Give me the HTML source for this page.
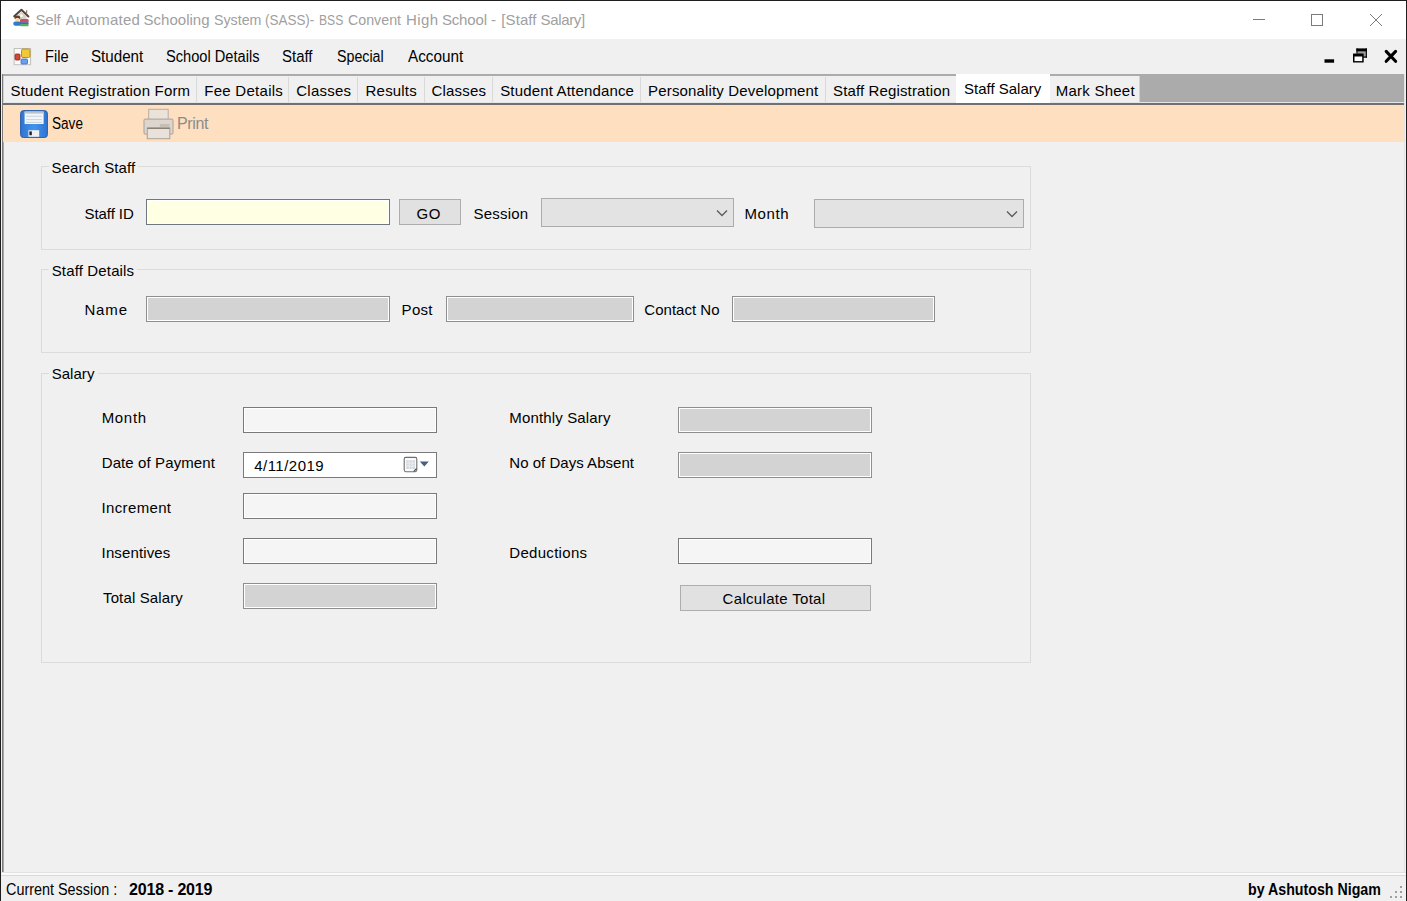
<!DOCTYPE html><html><head><meta charset='utf-8'><style>html,body{margin:0;padding:0;width:1407px;height:901px;overflow:hidden;background:#f0f0f0}.t{position:absolute;font-family:'Liberation Sans',sans-serif;line-height:1;white-space:nowrap}</style></head><body>
<div style="position:absolute;left:0px;top:0px;width:1407px;height:901px;box-sizing:border-box;background:#f0f0f0"></div>
<div style="position:absolute;left:0px;top:0px;width:1407px;height:1px;box-sizing:border-box;background:#1e1e1e"></div>
<div style="position:absolute;left:0px;top:0px;width:1px;height:901px;box-sizing:border-box;background:#1e1e1e"></div>
<div style="position:absolute;left:1406px;top:0px;width:1px;height:901px;box-sizing:border-box;background:#1e1e1e"></div>
<div style="position:absolute;left:1px;top:1px;width:1405px;height:38px;box-sizing:border-box;background:#fff"></div>
<div style="position:absolute;left:1px;top:39px;width:1405px;height:35px;box-sizing:border-box;background:#f0f0f0"></div>
<div style="position:absolute;left:2px;top:74px;width:1px;height:799px;box-sizing:border-box;background:#7c7c7c"></div>
<div style="position:absolute;left:3px;top:74px;width:1px;height:799px;box-sizing:border-box;background:#a8a8a8"></div>
<div style="position:absolute;left:1404px;top:74px;width:1px;height:799px;box-sizing:border-box;background:#e3e3e3"></div>
<div style="position:absolute;left:3px;top:74px;width:1401px;height:30px;box-sizing:border-box;background:#ababab"></div>
<div style="position:absolute;left:4px;top:76px;width:1136px;height:26px;box-sizing:border-box;background:#f0f0f0"></div>
<div style="position:absolute;left:196px;top:77px;width:1px;height:25px;box-sizing:border-box;background:#d9d9d9"></div>
<div style="position:absolute;left:288px;top:77px;width:1px;height:25px;box-sizing:border-box;background:#d9d9d9"></div>
<div style="position:absolute;left:357px;top:77px;width:1px;height:25px;box-sizing:border-box;background:#d9d9d9"></div>
<div style="position:absolute;left:424px;top:77px;width:1px;height:25px;box-sizing:border-box;background:#d9d9d9"></div>
<div style="position:absolute;left:492px;top:77px;width:1px;height:25px;box-sizing:border-box;background:#d9d9d9"></div>
<div style="position:absolute;left:640px;top:77px;width:1px;height:25px;box-sizing:border-box;background:#d9d9d9"></div>
<div style="position:absolute;left:825px;top:77px;width:1px;height:25px;box-sizing:border-box;background:#d9d9d9"></div>
<div style="position:absolute;left:1139px;top:76px;width:1px;height:26px;box-sizing:border-box;background:#d0d0d0"></div>
<div style="position:absolute;left:3px;top:76px;width:1px;height:26px;box-sizing:border-box;background:#d0d0d0"></div>
<div style="position:absolute;left:956px;top:74px;width:94px;height:29px;box-sizing:border-box;background:#fff"></div>
<div style="position:absolute;left:3px;top:102px;width:1401px;height:1px;box-sizing:border-box;background:#e6e6e6"></div>
<div style="position:absolute;left:956px;top:102px;width:94px;height:1px;box-sizing:border-box;background:#fff"></div>
<div style="position:absolute;left:3px;top:103px;width:1401px;height:2px;box-sizing:border-box;background:#707070"></div>
<div style="position:absolute;left:3px;top:105px;width:1401px;height:37px;box-sizing:border-box;background:#fedfc0"></div>
<div style="position:absolute;left:1px;top:872px;width:1405px;height:1px;box-sizing:border-box;background:#e2e2e2"></div>
<div style="position:absolute;left:1px;top:873px;width:1405px;height:2px;box-sizing:border-box;background:#fafafa"></div>
<div style="position:absolute;left:1px;top:875px;width:1405px;height:1px;box-sizing:border-box;background:#d9d9d9"></div>
<div style="position:absolute;left:41px;top:166px;width:990px;height:84px;box-sizing:border-box;border:1px solid #dcdcdc"></div>
<div style="position:absolute;left:49px;top:165px;width:89px;height:3px;box-sizing:border-box;background:#f0f0f0"></div>
<div style="position:absolute;left:41px;top:269px;width:990px;height:84px;box-sizing:border-box;border:1px solid #dcdcdc"></div>
<div style="position:absolute;left:49px;top:268px;width:88px;height:3px;box-sizing:border-box;background:#f0f0f0"></div>
<div style="position:absolute;left:41px;top:373px;width:990px;height:290px;box-sizing:border-box;border:1px solid #dcdcdc"></div>
<div style="position:absolute;left:49px;top:372px;width:49px;height:3px;box-sizing:border-box;background:#f0f0f0"></div>
<div style="position:absolute;left:146px;top:199px;width:244px;height:26px;box-sizing:border-box;border:1px solid #6f7780;background:#ffffe3;box-shadow:inset 0 0 0 1px #fff"></div>
<div style="position:absolute;left:146px;top:296px;width:244px;height:26px;box-sizing:border-box;border:1px solid #8e8e8e;background:#d3d3d3;box-shadow:inset 0 0 0 1px #fff"></div>
<div style="position:absolute;left:446px;top:296px;width:188px;height:26px;box-sizing:border-box;border:1px solid #8e8e8e;background:#d3d3d3;box-shadow:inset 0 0 0 1px #fff"></div>
<div style="position:absolute;left:732px;top:296px;width:203px;height:26px;box-sizing:border-box;border:1px solid #8e8e8e;background:#d3d3d3;box-shadow:inset 0 0 0 1px #fff"></div>
<div style="position:absolute;left:243px;top:407px;width:194px;height:26px;box-sizing:border-box;border:1px solid #7a7a7a;background:#f5f5f5;box-shadow:inset 0 0 0 1px #fff"></div>
<div style="position:absolute;left:243px;top:452px;width:194px;height:26px;box-sizing:border-box;border:1px solid #7a7a7a;background:#fff"></div>
<div style="position:absolute;left:243px;top:493px;width:194px;height:26px;box-sizing:border-box;border:1px solid #7a7a7a;background:#f5f5f5;box-shadow:inset 0 0 0 1px #fff"></div>
<div style="position:absolute;left:243px;top:538px;width:194px;height:26px;box-sizing:border-box;border:1px solid #7a7a7a;background:#f5f5f5;box-shadow:inset 0 0 0 1px #fff"></div>
<div style="position:absolute;left:243px;top:583px;width:194px;height:26px;box-sizing:border-box;border:1px solid #8e8e8e;background:#d3d3d3;box-shadow:inset 0 0 0 1px #fff"></div>
<div style="position:absolute;left:678px;top:407px;width:194px;height:26px;box-sizing:border-box;border:1px solid #8e8e8e;background:#d3d3d3;box-shadow:inset 0 0 0 1px #fff"></div>
<div style="position:absolute;left:678px;top:452px;width:194px;height:26px;box-sizing:border-box;border:1px solid #8e8e8e;background:#d3d3d3;box-shadow:inset 0 0 0 1px #fff"></div>
<div style="position:absolute;left:678px;top:538px;width:194px;height:26px;box-sizing:border-box;border:1px solid #7a7a7a;background:#f5f5f5;box-shadow:inset 0 0 0 1px #fff"></div>
<div style="position:absolute;left:399px;top:199px;width:62px;height:26px;box-sizing:border-box;border:1px solid #adadad;background:#e1e1e1"></div>
<div style="position:absolute;left:680px;top:585px;width:191px;height:26px;box-sizing:border-box;border:1px solid #adadad;background:#e1e1e1"></div>
<div style="position:absolute;left:541px;top:198px;width:193px;height:29px;box-sizing:border-box;border:1px solid #acacac;background:#e3e3e3"></div>
<div style="position:absolute;left:814px;top:199px;width:210px;height:29px;box-sizing:border-box;border:1px solid #acacac;background:#e3e3e3"></div>
<svg style='position:absolute;left:716px;top:209px' width='12' height='8'><path d='M1 1.5 L6 6.5 L11 1.5' fill='none' stroke='#5a5a5a' stroke-width='1.3'/></svg>
<svg style='position:absolute;left:1006px;top:210px' width='12' height='8'><path d='M1 1.5 L6 6.5 L11 1.5' fill='none' stroke='#5a5a5a' stroke-width='1.3'/></svg>
<svg style='position:absolute;left:1240px;top:5px' width='160' height='30'><path d='M13 14.5 H25' stroke='#7a7a7a' stroke-width='1'/><rect x='71.5' y='9.5' width='11' height='11' fill='none' stroke='#7a7a7a' stroke-width='1'/><path d='M130 9 L142 21 M142 9 L130 21' stroke='#7a7a7a' stroke-width='1'/></svg>
<svg style='position:absolute;left:1320px;top:44px' width='85' height='24'><rect x='4.5' y='15.3' width='9.6' height='3.4' fill='#000'/><rect x='37.4' y='7' width='8.4' height='6' fill='#9c9c9c'/><rect x='36.4' y='4.4' width='10.5' height='2.9' fill='#000'/><rect x='36.4' y='4.4' width='1.2' height='5.2' fill='#000'/><rect x='45.7' y='4.4' width='1.2' height='9.3' fill='#000'/><rect x='43' y='12.5' width='3.9' height='1.2' fill='#000'/><rect x='33' y='9.4' width='10.7' height='9.1' rx='0.5' fill='#000'/><rect x='34.5' y='12.5' width='7.7' height='4.6' fill='#fff'/><path d='M66.2 7.4 L75.6 17.3 M75.6 7.4 L66.2 17.3' stroke='#000' stroke-width='3.1' stroke-linecap='round'/></svg>
<svg style='position:absolute;left:8px;top:4px' width='28' height='28'><path d='M8.5 12.5 L13.4 8 L18.5 12.5 V15.5 H8.5Z' fill='#d9d0c6'/><path d='M12.2 10.5 h2.4 v2.4 h-2.4z' fill='#fff'/><path d='M6.2 12.3 L13.4 5.8 L20.4 12.5' fill='none' stroke='#54463a' stroke-width='2' stroke-linejoin='round' stroke-linecap='round'/><path d='M18.6 6.3 V10.2' stroke='#8a7a6a' stroke-width='1.2'/><ellipse cx='9.3' cy='13.5' rx='2.9' ry='2' fill='#5e4228'/><rect x='7.4' y='14' width='3.8' height='3.2' rx='1' fill='#f8d6b4'/><rect x='5.3' y='17.4' width='8' height='4.4' rx='2' fill='#2c7ec8'/><rect x='12' y='15' width='8.6' height='3.4' rx='1.2' fill='#c65262'/><rect x='12' y='18.2' width='8.6' height='2.1' fill='#5460b0'/><rect x='12' y='20.1' width='8.6' height='2.1' rx='0.8' fill='#4ab464'/></svg>
<svg style='position:absolute;left:13px;top:47px' width='19' height='19'><rect x='1.2' y='1.5' width='16.4' height='16.2' fill='#fafafa' stroke='#c0c0c0' stroke-width='1'/><rect x='8.5' y='2' width='8.5' height='8.5' rx='1.5' fill='#f3c838' stroke='#b09428' stroke-width='1'/><rect x='2' y='7' width='5' height='6' rx='1' fill='#d04838' stroke='#902818' stroke-width='0.8'/><rect x='8' y='12' width='6.5' height='5' rx='1' fill='#6aa0f0' stroke='#3a6ac0' stroke-width='0.8'/></svg>
<svg style='position:absolute;left:20px;top:110px' width='28' height='28'><defs><linearGradient id='fg' x1='0' y1='0' x2='1' y2='0'><stop offset='0' stop-color='#2f74d0'/><stop offset='0.5' stop-color='#4294ec'/><stop offset='1' stop-color='#2f74d0'/></linearGradient></defs><rect x='0.6' y='0.6' width='26.8' height='27' rx='3' fill='url(#fg)' stroke='#2a5caa' stroke-width='1'/><rect x='4.6' y='1.6' width='19' height='12.4' fill='#f2f6fb'/><rect x='4.6' y='1.6' width='19' height='2' fill='#b8c2cc'/><path d='M6 6.3 H22 M6 9.6 H22 M6 12.4 H22' stroke='#c6ced8' stroke-width='0.9'/><rect x='8.4' y='20.2' width='10.8' height='6.6' fill='#eef0f4'/><rect x='9.4' y='21.4' width='2.4' height='3.8' fill='#1e1e1e'/></svg>
<svg style='position:absolute;left:140px;top:106px' width='36' height='36'><rect x='8.7' y='3.3' width='19.5' height='10.7' fill='#e9e3da' stroke='#b8aea4' stroke-width='1'/><rect x='4' y='13.1' width='29' height='15' rx='1' fill='#ddd6ce' stroke='#aaa299' stroke-width='1'/><rect x='19.8' y='18' width='9.8' height='2.9' fill='#c6beb5'/><rect x='7.3' y='22' width='22.5' height='10.7' fill='#e8e2da' stroke='#aaa299' stroke-width='1'/><path d='M7.3 22.3 H29.8' stroke='#8a8278' stroke-width='1.4'/></svg>
<svg style='position:absolute;left:400px;top:454px' width='32' height='20'><rect x='4.2' y='3.4' width='12.6' height='14.3' rx='1.6' fill='#fbfbfb' stroke='#6e6e6e' stroke-width='1.1'/><rect x='6.3' y='6.2' width='8.6' height='8.8' fill='#d3d8de'/><path d='M6.3 9.1 H14.9 M6.3 12 H14.9 M9.2 6.2 V15 M12.1 6.2 V15' stroke='#eef0f3' stroke-width='0.9'/><path d='M13.8 17.3 L16.5 14.6' stroke='#444' stroke-width='1.2'/><path d='M19.8 7.6 H28.8 L24.3 12.4Z' fill='#4a5e80'/></svg>
<div style="position:absolute;left:1400px;top:886px;width:2px;height:2px;box-sizing:border-box;background:#a0a0a0"></div>
<div style="position:absolute;left:1395px;top:891px;width:2px;height:2px;box-sizing:border-box;background:#a0a0a0"></div>
<div style="position:absolute;left:1400px;top:891px;width:2px;height:2px;box-sizing:border-box;background:#a0a0a0"></div>
<div style="position:absolute;left:1390px;top:896px;width:2px;height:2px;box-sizing:border-box;background:#a0a0a0"></div>
<div style="position:absolute;left:1395px;top:896px;width:2px;height:2px;box-sizing:border-box;background:#a0a0a0"></div>
<div style="position:absolute;left:1400px;top:896px;width:2px;height:2px;box-sizing:border-box;background:#a0a0a0"></div>
<div class=t style="left:35.60px;top:12.00px;font-size:15px;font-weight:400;color:#a0a0a0;letter-spacing:-0.233px">Self</div>
<div class=t style="left:65.70px;top:12.00px;font-size:15px;font-weight:400;color:#a0a0a0;letter-spacing:0.200px">Automated</div>
<div class=t style="left:143.60px;top:12.00px;font-size:15px;font-weight:400;color:#a0a0a0;letter-spacing:0.012px">Schooling</div>
<div class=t style="left:213.95px;top:12.00px;font-size:15px;font-weight:400;color:#a0a0a0;transform:scaleX(0.9479);transform-origin:0 0">System</div>
<div class=t style="left:265.20px;top:12.00px;font-size:15px;font-weight:400;color:#a0a0a0;transform:scaleX(0.8963);transform-origin:0 0">(SASS)-</div>
<div class=t style="left:319.09px;top:12.00px;font-size:15px;font-weight:400;color:#a0a0a0;transform:scaleX(0.8103);transform-origin:0 0">BSS</div>
<div class=t style="left:348.05px;top:12.00px;font-size:15px;font-weight:400;color:#a0a0a0;transform:scaleX(0.9491);transform-origin:0 0">Convent</div>
<div class=t style="left:405.90px;top:12.00px;font-size:15px;font-weight:400;color:#a0a0a0;letter-spacing:0.433px">High</div>
<div class=t style="left:441.90px;top:12.00px;font-size:15px;font-weight:400;color:#a0a0a0;letter-spacing:-0.140px">School</div>
<div class=t style="left:490.90px;top:12.00px;font-size:15px;font-weight:400;color:#a0a0a0;letter-spacing:0.000px">-</div>
<div class=t style="left:501.30px;top:12.00px;font-size:15px;font-weight:400;color:#a0a0a0;letter-spacing:0.080px">[Staff</div>
<div class=t style="left:540.60px;top:12.00px;font-size:15px;font-weight:400;color:#a0a0a0;letter-spacing:-0.350px">Salary]</div>
<div class=t style="left:45.49px;top:49.00px;font-size:16px;font-weight:400;color:#000;transform:scaleX(0.9125);transform-origin:0 0">File</div>
<div class=t style="left:91.25px;top:49.00px;font-size:16px;font-weight:400;color:#000;transform:scaleX(0.9463);transform-origin:0 0">Student</div>
<div class=t style="left:166.09px;top:49.00px;font-size:16px;font-weight:400;color:#000;transform:scaleX(0.9139);transform-origin:0 0">School Details</div>
<div class=t style="left:282.37px;top:49.00px;font-size:16px;font-weight:400;color:#000;transform:scaleX(0.9344);transform-origin:0 0">Staff</div>
<div class=t style="left:336.61px;top:49.00px;font-size:16px;font-weight:400;color:#000;transform:scaleX(0.8882);transform-origin:0 0">Special</div>
<div class=t style="left:407.70px;top:49.00px;font-size:16px;font-weight:400;color:#000;transform:scaleX(0.9552);transform-origin:0 0">Account</div>
<div class=t style="left:10.50px;top:83.40px;font-size:15px;font-weight:400;color:#000;letter-spacing:0.188px">Student Registration Form</div>
<div class=t style="left:204.20px;top:83.40px;font-size:15px;font-weight:400;color:#000;letter-spacing:0.280px">Fee Details</div>
<div class=t style="left:296.30px;top:83.40px;font-size:15px;font-weight:400;color:#000;letter-spacing:0.217px">Classes</div>
<div class=t style="left:365.60px;top:83.40px;font-size:15px;font-weight:400;color:#000;letter-spacing:0.183px">Results</div>
<div class=t style="left:431.40px;top:83.40px;font-size:15px;font-weight:400;color:#000;letter-spacing:0.217px">Classes</div>
<div class=t style="left:500.20px;top:83.40px;font-size:15px;font-weight:400;color:#000;letter-spacing:0.165px">Student Attendance</div>
<div class=t style="left:648.10px;top:83.40px;font-size:15px;font-weight:400;color:#000;letter-spacing:0.155px">Personality Development</div>
<div class=t style="left:833.00px;top:83.40px;font-size:15px;font-weight:400;color:#000;letter-spacing:0.135px">Staff Registration</div>
<div class=t style="left:964.00px;top:81.30px;font-size:15px;font-weight:400;color:#000;letter-spacing:0.000px">Staff Salary</div>
<div class=t style="left:1055.80px;top:83.40px;font-size:15px;font-weight:400;color:#000;letter-spacing:0.233px">Mark Sheet</div>
<div class=t style="left:51.65px;top:115.90px;font-size:16px;font-weight:400;color:#000;transform:scaleX(0.8486);transform-origin:0 0">Save</div>
<div class=t style="left:177.00px;top:115.90px;font-size:16px;font-weight:400;color:#8c8c8c;letter-spacing:-0.350px">Print</div>
<div class=t style="left:51.50px;top:159.80px;font-size:15px;font-weight:400;color:#000;letter-spacing:0.136px">Search Staff</div>
<div class=t style="left:51.70px;top:262.60px;font-size:15px;font-weight:400;color:#000;letter-spacing:0.150px">Staff Details</div>
<div class=t style="left:51.70px;top:366.20px;font-size:15px;font-weight:400;color:#000;letter-spacing:0.040px">Salary</div>
<div class=t style="left:84.50px;top:206.10px;font-size:15px;font-weight:400;color:#000;letter-spacing:-0.071px">Staff ID</div>
<div class=t style="left:416.60px;top:206.10px;font-size:15px;font-weight:400;color:#000;letter-spacing:0.400px">GO</div>
<div class=t style="left:473.50px;top:206.10px;font-size:15px;font-weight:400;color:#000;letter-spacing:0.217px">Session</div>
<div class=t style="left:744.40px;top:206.10px;font-size:15px;font-weight:400;color:#000;letter-spacing:0.625px">Month</div>
<div class=t style="left:84.40px;top:302.40px;font-size:15px;font-weight:400;color:#000;letter-spacing:0.867px">Name</div>
<div class=t style="left:401.60px;top:302.40px;font-size:15px;font-weight:400;color:#000;letter-spacing:0.300px">Post</div>
<div class=t style="left:644.30px;top:302.40px;font-size:15px;font-weight:400;color:#000;letter-spacing:0.022px">Contact No</div>
<div class=t style="left:101.70px;top:410.00px;font-size:15px;font-weight:400;color:#000;letter-spacing:0.675px">Month</div>
<div class=t style="left:101.70px;top:454.80px;font-size:15px;font-weight:400;color:#000;letter-spacing:0.107px">Date of Payment</div>
<div class=t style="left:101.60px;top:499.90px;font-size:15px;font-weight:400;color:#000;letter-spacing:0.338px">Increment</div>
<div class=t style="left:101.60px;top:545.00px;font-size:15px;font-weight:400;color:#000;letter-spacing:0.122px">Insentives</div>
<div class=t style="left:103.00px;top:589.60px;font-size:15px;font-weight:400;color:#000;letter-spacing:0.136px">Total Salary</div>
<div class=t style="left:509.30px;top:410.40px;font-size:15px;font-weight:400;color:#000;letter-spacing:0.146px">Monthly Salary</div>
<div class=t style="left:509.30px;top:455.40px;font-size:15px;font-weight:400;color:#000;letter-spacing:0.025px">No of Days Absent</div>
<div class=t style="left:509.30px;top:545.00px;font-size:15px;font-weight:400;color:#000;letter-spacing:0.300px">Deductions</div>
<div class=t style="left:722.60px;top:591.20px;font-size:15px;font-weight:400;color:#000;letter-spacing:0.314px">Calculate Total</div>
<div class=t style="left:254.20px;top:458.20px;font-size:15px;font-weight:400;color:#000;letter-spacing:0.475px">4/11/2019</div>
<div class=t style="left:5.60px;top:882.00px;font-size:16px;font-weight:400;color:#000;transform:scaleX(0.8992);transform-origin:0 0">Current Session :</div>
<div class=t style="left:129.10px;top:882.00px;font-size:16px;font-weight:700;color:#000;letter-spacing:-0.210px">2018 - 2019</div>
<div class=t style="left:1248.01px;top:882.00px;font-size:16px;font-weight:700;color:#000;transform:scaleX(0.8878);transform-origin:0 0">by Ashutosh Nigam</div>
</body></html>
